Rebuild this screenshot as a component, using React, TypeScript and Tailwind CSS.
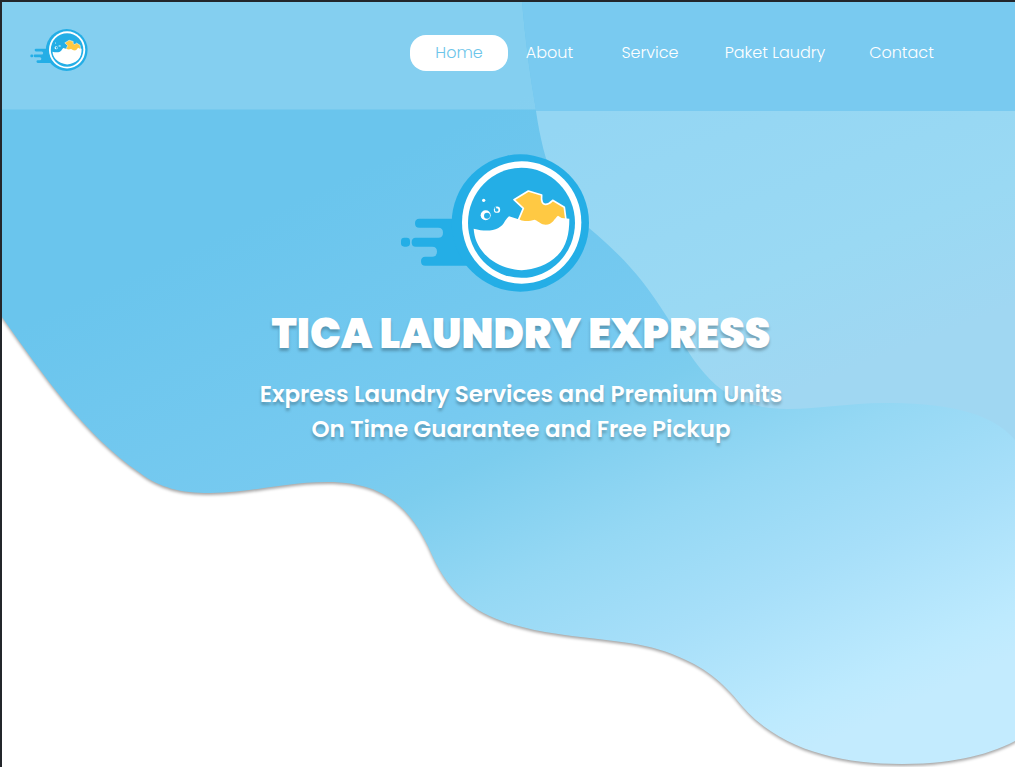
type LogoProps = { className: string };

function Logo({ className }: LogoProps) {
  return (
    <svg viewBox="30 28 570 414" className={className} role="img" aria-label="Tica Laundry Express">
      <g fill="#24aee6">
        <path d="M88 222H240V363H106Q93 363 93 349.500Q93 336 106 336H127Q141 336 141 321Q141 306 127 306H77Q65 306 65 292.500Q65 279 77 279H145Q159 279 159 264Q159 249 145 249H88Q75 249 75 235.500Q75 222 88 222Z" />
        <rect x="33" y="279" width="27" height="27" rx="10" />
        <circle cx="391" cy="235" r="206" />
      </g>
      <ellipse cx="395" cy="233.500" rx="179" ry="183.500" fill="#fff" />
      <ellipse cx="394.500" cy="234.500" rx="160.500" ry="165" fill="#24aee6" />
      <path
        d="M372 165L415 139L455 151C453 172 458 180 467 179C477 179 482 173 488 167L523 188L528 226L500 250L387 240L386 224L400 191Z"
        fill="#ffc943"
        stroke="#fff"
        strokeWidth="5"
        strokeLinejoin="round"
      />
      <path
        d="M251 252C298 265 332 256 345 229Q350 221 357 215L390 225C407 233 421 228 434 225C449 231 453 240 467 240C488 240 494 220 504 213L515 220L538 222C538 267 530 303 503 332C473 363 433 374 395 377C351 374 310 357 283 327C263 304 253 281 251 252Z"
        fill="#fff"
      />
      <circle cx="281" cy="167" r="5" fill="#fff" />
      <circle cx="287" cy="212" r="15" fill="#fff" />
      <circle cx="291" cy="213" r="9" fill="#24aee6" />
      <circle cx="321" cy="195" r="9.500" fill="#fff" />
      <circle cx="320" cy="196" r="5.500" fill="#24aee6" />
      <circle cx="316" cy="190" r="3" fill="#24aee6" />
    </svg>
  );
}

function Backdrop() {
  return (
    <svg
      viewBox="2 2 1013 765"
      preserveAspectRatio="none"
      className="absolute inset-0 h-full w-full"
      aria-hidden="true"
    >
      <defs>
        <linearGradient id="water" gradientUnits="userSpaceOnUse" x1="0" y1="0" x2="425" y2="926">
          <stop offset="0.3" stopColor="#6ac5ed" />
          <stop offset="0.56" stopColor="#77caf0" />
          <stop offset="0.61" stopColor="#7ccdee" />
          <stop offset="0.73" stopColor="#95d8f4" />
          <stop offset="0.84" stopColor="#a7dff9" />
          <stop offset="0.96" stopColor="#bdeafe" />
          <stop offset="1" stopColor="#c3ebfe" />
        </linearGradient>
        <linearGradient id="foam" gradientUnits="userSpaceOnUse" x1="600" y1="110" x2="720" y2="420">
          <stop offset="0" stopColor="#94d6f3" />
          <stop offset="0.65" stopColor="#9ad9f3" />
          <stop offset="1" stopColor="#a0d7f2" />
        </linearGradient>
        <filter id="edge" x="-5%" y="-5%" width="110%" height="110%" colorInterpolationFilters="sRGB">
          <feDropShadow dx="0" dy="2" stdDeviation="1.500" floodColor="#000" floodOpacity="0.350" />
        </filter>
      </defs>
      <path
        filter="url(#edge)"
        fill="url(#water)"
        d="M-10 -10V300L2 317C45 378 85 435 140 473C160 488 181 493 210 493C250 493 285 482 327 482C380 482 410 503 432 555C455 606 490 622 545 632C600 641 637 640 672 654C705 667 722 681 742 706C780 750 840 764 902 764C945 764 985 757 1015 741L1030 732V-10Z"
      />
      <path
        fill="url(#foam)"
        d="M536 111C544 165 558 202 589 228C620 254 642 277 667 317C695 362 715 409 787 409C820 409 850 403 883 403C940 403 990 410 1015 440V111Z"
      />
      <path fill="#fff" fillOpacity="0.180" d="M2 2H522Q527 60 536 109.500H2Z" />
      <path fill="#79caf0" d="M522 2Q527 60 536 111H1015V2Z" />
    </svg>
  );
}

const links = [
  { label: "Home", className: "w-[98px] rounded-2xl bg-white text-[#6cc5ea]" },
  { label: "About", className: "w-[83px] text-white" },
  { label: "Service", className: "w-[118px] text-white" },
  { label: "Paket Laudry", className: "w-[132px] text-white" },
  { label: "Contact", className: "w-[121px] text-white" },
];

export default function App() {
  return (
    <div className="min-h-screen border-t-2 border-l-2 border-[#23262b] bg-white font-['Poppins','Inter',sans-serif]">
      <div className="relative min-h-[calc(100vh-2px)] overflow-hidden">
        <Backdrop />
        <div className="relative">
          <header className="flex h-[107px] items-start justify-between pr-[53px] pl-7">
            <a href="#home" className="mt-[27px]">
              <Logo className="h-[42px] w-[58px]" />
            </a>
            <nav className="mt-[33px] flex text-base font-light">
              {links.map((link) => (
                <a
                  key={link.label}
                  href={`#${link.label.toLowerCase().replace(" ", "-")}`}
                  className={`flex h-9 items-center justify-center whitespace-nowrap ${link.className}`}
                >
                  {link.label}
                </a>
              ))}
            </nav>
          </header>
          <main className="flex flex-col items-center pt-[45px] pl-[25px] text-center text-white">
            <Logo className="mr-[52px] h-[138px] w-[190px]" />
            <h1 className="mt-[17px] text-[41px] leading-[50px] font-black text-shadow-[0_3px_3px_rgb(0_0_0/0.25)]">
              TICA LAUNDRY EXPRESS
            </h1>
            <p className="mt-[18px] text-[23px] leading-[35px] font-semibold text-shadow-[0_3px_3px_rgb(0_0_0/0.25)]">
              Express Laundry Services and Premium Units
              <br />
              On Time Guarantee and Free Pickup
            </p>
          </main>
        </div>
      </div>
    </div>
  );
}
